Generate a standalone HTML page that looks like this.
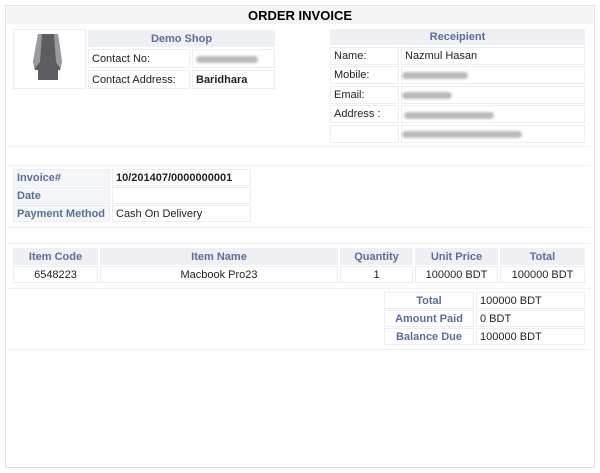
<!DOCTYPE html><html><head><style>
body{margin:0;width:600px;height:473px;background:#fff;font-family:"Liberation Sans",sans-serif;font-size:11px;color:#222;position:relative;overflow:hidden}
div{position:absolute;box-sizing:border-box}
.c{border:1px solid #eceef2;background:#fff;line-height:16px;padding-left:3px}
.h{background:#eef0f4;color:#5a6d9c;font-weight:bold;text-align:center;padding:0;border:1px solid #eef0f4}
.l{color:#5a6d9c;font-weight:bold;background:#f5f6f8}
.ctr{text-align:center;padding:0}
.b{font-weight:bold}
.blur{height:7px;border-radius:4px;background:#bbb;filter:blur(1.2px)}
.sep{left:8px;width:583px;border-top:1px solid #eef0f2;height:0}
</style></head><body>
<div style="left:5px;top:5px;width:590px;height:463px;border:1px solid #dde0e4;border-radius:2px"></div>
<div style="left:7px;top:7px;width:586px;height:17px;background:#f3f4f6;text-align:center;font-weight:bold;font-size:13px;line-height:17px;color:#000">ORDER INVOICE</div>
<div class="c" style="left:13px;top:29px;width:73px;height:60px"></div>
<svg style="position:absolute;left:32px;top:32px" width="32" height="50" viewBox="0 0 32 50"><path d="M6 2 L26 2 L30 30 L28 38 L26 38 L26 48 L6 48 L6 38 L3 38 L1 30 Z" fill="#5c5d63"/><path d="M6 2 L10 2 L8 30 L3 36 L1 30Z M22 2 L26 2 L30 30 L28 36 L24 30Z" fill="#9a9aa0"/></svg>
<div class="c h" style="left:88px;top:30px;width:187px;height:17px">Demo Shop</div>
<div class="c" style="left:88px;top:49px;width:102px;height:19px;line-height:18px">Contact No:</div>
<div class="c" style="left:192px;top:49px;width:83px;height:19px"></div>
<div class="blur" style="left:196px;top:56px;width:62px"></div>
<div class="c" style="left:88px;top:70px;width:102px;height:19px;line-height:18px">Contact Address:</div>
<div class="c b" style="left:192px;top:70px;width:83px;height:19px;line-height:18px">Baridhara</div>
<div class="c h" style="left:330px;top:29px;width:255px;height:16px;line-height:15px">Receipient</div>
<div class="c" style="left:330px;top:47px;width:69px;height:18px">Name:</div>
<div class="c" style="left:401px;top:47px;width:184px;height:18px">Nazmul Hasan</div>
<div class="c" style="left:330px;top:66px;width:69px;height:18px">Mobile:</div>
<div class="c" style="left:401px;top:66px;width:184px;height:18px"></div>
<div class="blur" style="left:402px;top:72px;width:66px"></div>
<div class="c" style="left:330px;top:86px;width:69px;height:18px">Email:</div>
<div class="c" style="left:401px;top:86px;width:184px;height:18px"></div>
<div class="blur" style="left:402px;top:92px;width:50px"></div>
<div class="c" style="left:330px;top:105px;width:69px;height:18px">Address :</div>
<div class="c" style="left:401px;top:105px;width:184px;height:18px"></div>
<div class="blur" style="left:404px;top:112px;width:90px"></div>
<div class="c" style="left:330px;top:125px;width:69px;height:18px"></div>
<div class="c" style="left:401px;top:125px;width:184px;height:18px"></div>
<div class="blur" style="left:402px;top:131px;width:120px"></div>
<div class="sep" style="top:146px"></div><div class="sep" style="top:165px"></div>
<div class="c l" style="left:13px;top:169px;width:97px;height:17px">Invoice#</div>
<div class="c b" style="left:112px;top:169px;width:139px;height:17px">10/201407/0000000001</div>
<div class="c l" style="left:13px;top:187px;width:97px;height:17px">Date</div>
<div class="c" style="left:112px;top:187px;width:139px;height:17px"></div>
<div class="c l" style="left:13px;top:205px;width:97px;height:17px">Payment Method</div>
<div class="c" style="left:112px;top:205px;width:139px;height:17px">Cash On Delivery</div>
<div class="sep" style="top:227px"></div><div class="sep" style="top:243px"></div>
<div class="c h" style="left:13px;top:248px;width:85px;height:17px">Item Code</div>
<div class="c h" style="left:100px;top:248px;width:238px;height:17px">Item Name</div>
<div class="c h" style="left:340px;top:248px;width:73px;height:17px">Quantity</div>
<div class="c h" style="left:415px;top:248px;width:83px;height:17px">Unit Price</div>
<div class="c h" style="left:500px;top:248px;width:85px;height:17px">Total</div>
<div class="c ctr" style="left:13px;top:266px;width:85px;height:17px">6548223</div>
<div class="c ctr" style="left:100px;top:266px;width:238px;height:17px">Macbook Pro23</div>
<div class="c ctr" style="left:340px;top:266px;width:73px;height:17px">1</div>
<div class="c ctr" style="left:415px;top:266px;width:83px;height:17px">100000 BDT</div>
<div class="c ctr" style="left:500px;top:266px;width:85px;height:17px">100000 BDT</div>
<div class="sep" style="top:288px"></div>
<div class="c l ctr" style="left:384px;top:292px;width:90px;height:17px;background:#fff">Total</div>
<div class="c" style="left:476px;top:292px;width:109px;height:17px">100000 BDT</div>
<div class="c l ctr" style="left:384px;top:310px;width:90px;height:17px;background:#fff">Amount Paid</div>
<div class="c" style="left:476px;top:310px;width:109px;height:17px">0 BDT</div>
<div class="c l ctr" style="left:384px;top:328px;width:90px;height:17px;background:#fff">Balance Due</div>
<div class="c" style="left:476px;top:328px;width:109px;height:17px">100000 BDT</div>
<div class="sep" style="top:349px"></div>
</body></html>
